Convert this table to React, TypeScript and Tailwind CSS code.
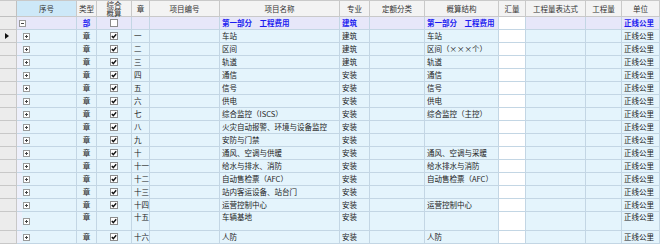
import React from "react";

const GRID =
  "grid grid-cols-[17px_60px_20px_35px_18px_70px_120px_30px_55px_74px_27px_60px_36px_38px]";

type Row = {
  no: string;
  name: string;
  major: string;
  struct: string;
  tall?: boolean;
};

const rows: Row[] = [
  { no: "一", name: "车站", major: "建筑", struct: "车站" },
  { no: "二", name: "区间", major: "建筑", struct: "区间（×××个）" },
  { no: "三", name: "轨道", major: "建筑", struct: "轨道" },
  { no: "四", name: "通信", major: "安装", struct: "通信" },
  { no: "五", name: "信号", major: "安装", struct: "信号" },
  { no: "六", name: "供电", major: "安装", struct: "供电" },
  { no: "七", name: "综合监控（ISCS）", major: "安装", struct: "综合监控（主控）" },
  { no: "八", name: "火灾自动报警、环境与设备监控", major: "安装", struct: "" },
  { no: "九", name: "安防与门禁", major: "安装", struct: "" },
  { no: "十", name: "通风、空调与供暖", major: "安装", struct: "通风、空调与采暖" },
  { no: "十一", name: "给水与排水、消防", major: "安装", struct: "给水排水与消防" },
  { no: "十二", name: "自动售检票（AFC）", major: "安装", struct: "自动售检票（AFC）" },
  { no: "十三", name: "站内客运设备、站台门", major: "安装", struct: "" },
  { no: "十四", name: "运营控制中心", major: "安装", struct: "运营控制中心" },
  { no: "十五", name: "车辆基地", major: "安装", struct: "", tall: true },
  { no: "十六", name: "人防", major: "安装", struct: "人防" },
];

function CheckBox({ checked }: { checked: boolean }) {
  return (
    <div className="w-[8px] h-[8px] bg-white border border-[#8c8c8c] flex items-center justify-center">
      {checked && (
        <svg width="6" height="6" viewBox="0 0 6 6">
          <path d="M0.8 3 L2.3 4.6 L5.2 1.2" stroke="#111" strokeWidth="1.4" fill="none" />
        </svg>
      )}
    </div>
  );
}

function ExpandBox({ open }: { open: boolean }) {
  return (
    <div className="w-[7px] h-[7px] bg-white border border-[#9a9a9a] flex items-center justify-center">
      <svg width="5" height="5" viewBox="0 0 5 5">
        <path d="M1 2.5 H4" stroke="#444" strokeWidth="1" />
        {!open && <path d="M2.5 1 V4" stroke="#444" strokeWidth="1" />}
      </svg>
    </div>
  );
}

const hcell =
  "flex items-center justify-center border-r border-b border-[#c9c9c9] text-[#333]";

function Header() {
  return (
    <div className={`${GRID} h-[17px] bg-[#f3f3f3] border-t border-[#c9c9c9]`}>
      <div className="bg-[#ececec] border-r border-b border-[#c0c0c0]" />
      <div className={`${hcell} bg-[#cde8f8]`}>序号</div>
      <div className={hcell}>类型</div>
      <div className={hcell}>
        <div className="w-[16px] whitespace-normal break-all text-center leading-[7.5px]">综合概算</div>
      </div>
      <div className={hcell}>章</div>
      <div className={hcell}>项目编号</div>
      <div className={hcell}>项目名称</div>
      <div className={hcell}>专业</div>
      <div className={hcell}>定额分类</div>
      <div className={hcell}>概算结构</div>
      <div className={hcell}>汇量</div>
      <div className={hcell}>工程量表达式</div>
      <div className={hcell}>工程量</div>
      <div className={hcell}>单位</div>
    </div>
  );
}

export default function App() {
  const line = "border-r border-b border-[#c3d6e4]";
  return (
    <div className="w-[660px] h-[245px] overflow-hidden bg-white text-[7.5px] leading-[10px] font-['Noto_Sans_CJK_SC','Noto_Sans',sans-serif] whitespace-nowrap">
      <Header />
      {/* 部 row */}
      <div className={`${GRID} h-[13px] bg-[#e7e7f9]`}>
        <div className="bg-[#ececec] border-r border-b border-[#c8c8c8]" />
        <div className={`${line} flex items-center pl-[2px]`}>
          <ExpandBox open />
        </div>
        <div className={`${line} flex items-center justify-center font-bold text-[#1c1cf0]`}>部</div>
        <div className={`${line} flex items-center justify-center`}>
          <CheckBox checked={false} />
        </div>
        <div className={line} />
        <div className={line} />
        <div className={`${line} flex items-center pl-[2px] font-bold text-[#1c1cf0]`}>
          第一部分　工程费用
        </div>
        <div className={`${line} flex items-center pl-[2px] font-bold text-[#1c1cf0]`}>建筑</div>
        <div className={line} />
        <div className={`${line} flex items-center pl-[2px] font-bold text-[#1c1cf0]`}>
          第一部分　工程费用
        </div>
        <div className={`${line} bg-white`} />
        <div className={line} />
        <div className={line} />
        <div className={`${line} flex items-center pl-[2px] font-bold text-[#1c1cf0]`}>正线公里</div>
      </div>
      {rows.map((r, i) => {
        const h = r.tall ? "h-[19px]" : "h-[13px]";
        const txt = r.tall ? "items-start" : "items-center";
        return (
          <div key={i} className={`${GRID} ${h} bg-[#e4f4fc] text-[#222]`}>
            <div className="bg-[#ececec] border-r border-b border-[#c8c8c8] flex items-center pl-[5px]">
              {i === 0 && (
                <svg width="4" height="6" viewBox="0 0 4 6">
                  <path d="M0 0 L4 3 L0 6 Z" fill="#111" />
                </svg>
              )}
            </div>
            <div className={`${line} flex items-stretch`}>
              <div className="w-[5px] bg-[#eef0fb]" />
              <div className="flex items-center pl-[1px]">
                <ExpandBox open={false} />
              </div>
            </div>
            <div className={`${line} flex ${txt} justify-center`}>章</div>
            <div className={`${line} flex items-center justify-center`}>
              <CheckBox checked />
            </div>
            <div className={`${line} flex ${txt} pl-[2px]`}>{r.no}</div>
            <div className={line} />
            <div className={`${line} flex ${txt} pl-[2px]`}>{r.name}</div>
            <div className={`${line} flex ${txt} pl-[2px]`}>{r.major}</div>
            <div className={line} />
            <div className={`${line} flex ${txt} pl-[2px]`}>{r.struct}</div>
            <div className={`${line} bg-white`} />
            <div className={line} />
            <div className={line} />
            <div className={`${line} flex ${txt} pl-[2px]`}>正线公里</div>
          </div>
        );
      })}
    </div>
  );
}
